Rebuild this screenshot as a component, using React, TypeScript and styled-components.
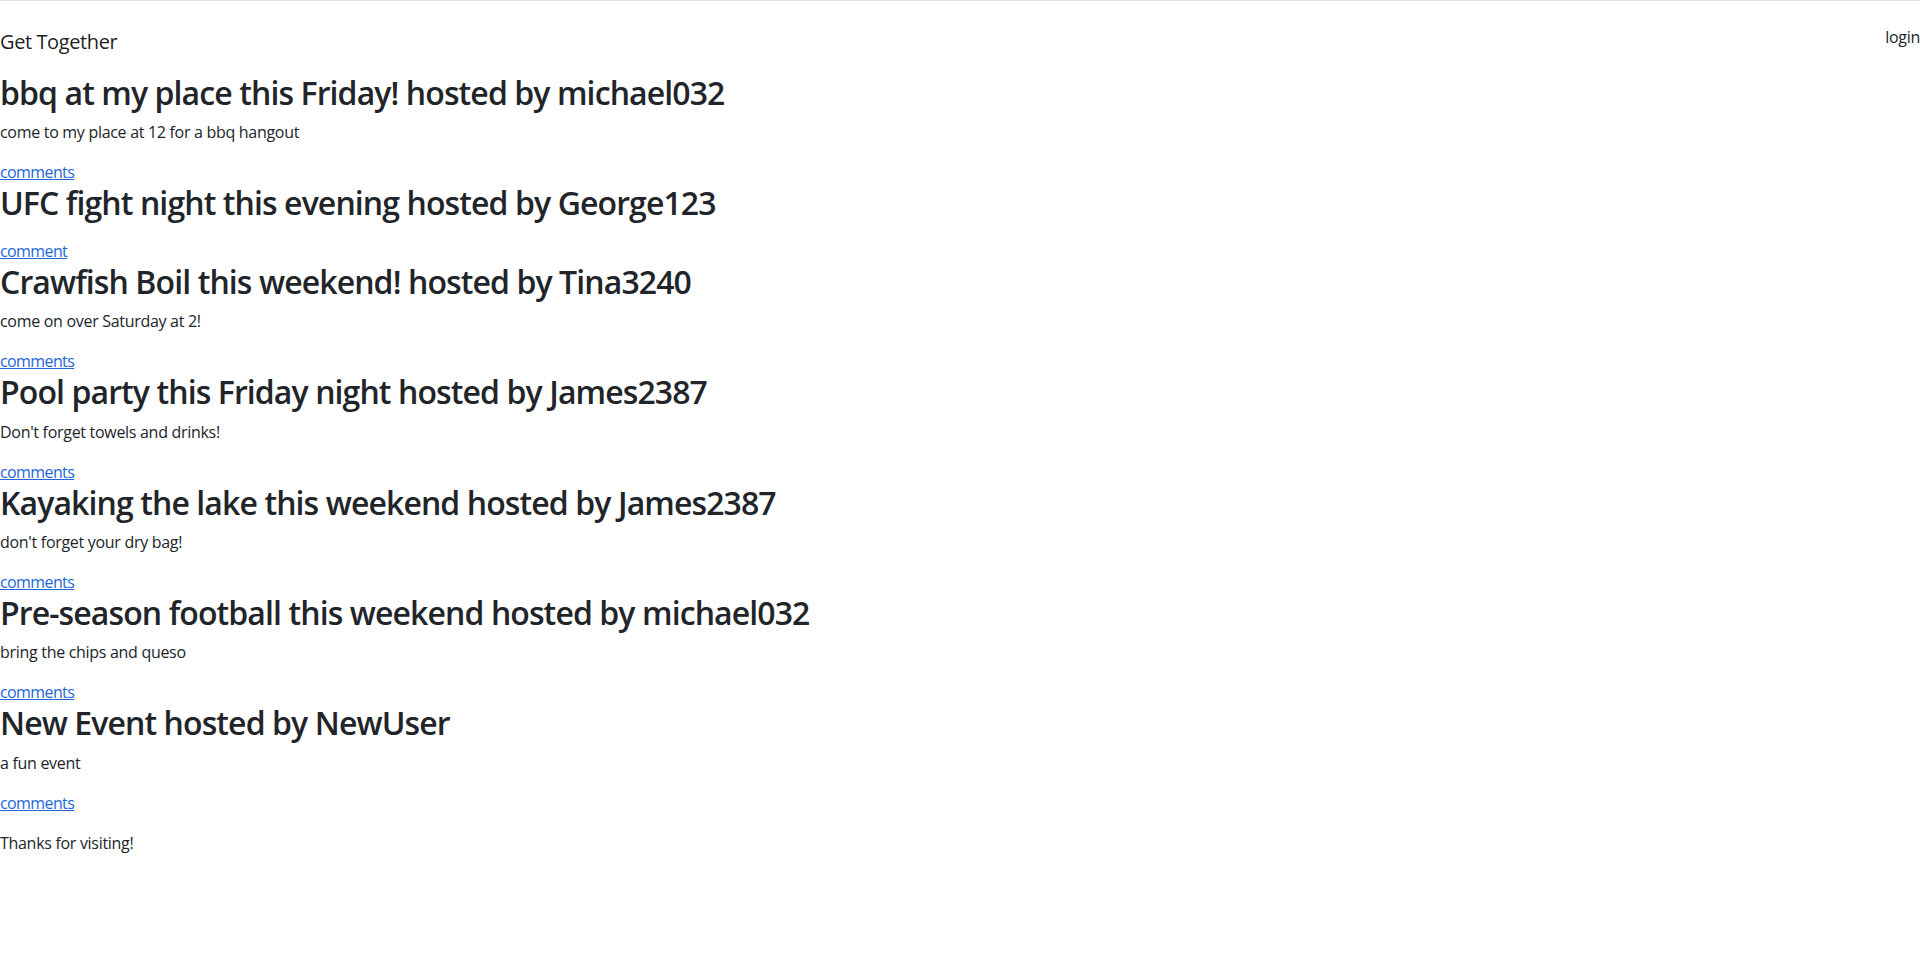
import React from "react";
import styled, { createGlobalStyle } from "styled-components";

const GlobalStyle = createGlobalStyle`
  html, body {
    margin: 0;
    padding: 0;
    background: #ffffff;
  }
  body {
    font-family: "Open Sans", "Noto Sans", sans-serif;
    font-size: 16px;
    line-height: 1.5;
    letter-spacing: -0.3px;
    color: #212529;
  }
  * { box-sizing: border-box; }
`;

const Page = styled.div`
  display: flex;
  flex-direction: column;
`;

const NavBar = styled.nav`
  display: flex;
  justify-content: space-between;
  align-items: flex-start;
  border-top: 1px solid #dcdcdc;
  padding-top: 26px;
  margin-bottom: 17px;
`;

const Brand = styled.a`
  font-size: 20px;
  line-height: 30px;
  letter-spacing: -0.4px;
  color: rgba(0, 0, 0, 0.9);
  text-decoration: none;
`;

const LoginLink = styled.a`
  font-size: 16px;
  line-height: 24px;
  color: #212529;
  text-decoration: none;
  margin-top: -2px;
`;

const EventList = styled.main`
  display: block;
`;

const EventItem = styled.section`
  display: block;
`;

const EventTitle = styled.h2`
  margin: 0 0 8px;
  font-size: 32px;
  font-weight: 600;
  line-height: 1.2;
  letter-spacing: -0.9px;
  color: #212529;
`;

const EventDescription = styled.p`
  margin: 0 0 16px;
`;

const CommentsLink = styled.a`
  color: #2466d6;
  text-decoration: underline;
  letter-spacing: -0.6px;
`;

const Footer = styled.p`
  margin: 16px 0 0;
`;

type EventData = {
  title: string;
  host: string;
  description: string;
  link: string;
};

const events: EventData[] = [
  { title: "bbq at my place this Friday!", host: "michael032", description: "come to my place at 12 for a bbq hangout", link: "comments" },
  { title: "UFC fight night this evening", host: "George123", description: "", link: "comment" },
  { title: "Crawfish Boil this weekend!", host: "Tina3240", description: "come on over Saturday at 2!", link: "comments" },
  { title: "Pool party this Friday night", host: "James2387", description: "Don't forget towels and drinks!", link: "comments" },
  { title: "Kayaking the lake this weekend", host: "James2387", description: "don't forget your dry bag!", link: "comments" },
  { title: "Pre-season football this weekend", host: "michael032", description: "bring the chips and queso", link: "comments" },
  { title: "New Event", host: "NewUser", description: "a fun event", link: "comments" },
];

export default function App() {
  return (
    <Page>
      <GlobalStyle />
      <NavBar>
        <Brand href="#">Get Together</Brand>
        <LoginLink href="#">login</LoginLink>
      </NavBar>
      <EventList>
        {events.map((e, i) => (
          <EventItem key={i}>
            <EventTitle>
              {e.title} hosted by {e.host}
            </EventTitle>
            <EventDescription>{e.description}</EventDescription>
            <CommentsLink href="#">{e.link}</CommentsLink>
          </EventItem>
        ))}
      </EventList>
      <Footer>Thanks for visiting!</Footer>
    </Page>
  );
}
